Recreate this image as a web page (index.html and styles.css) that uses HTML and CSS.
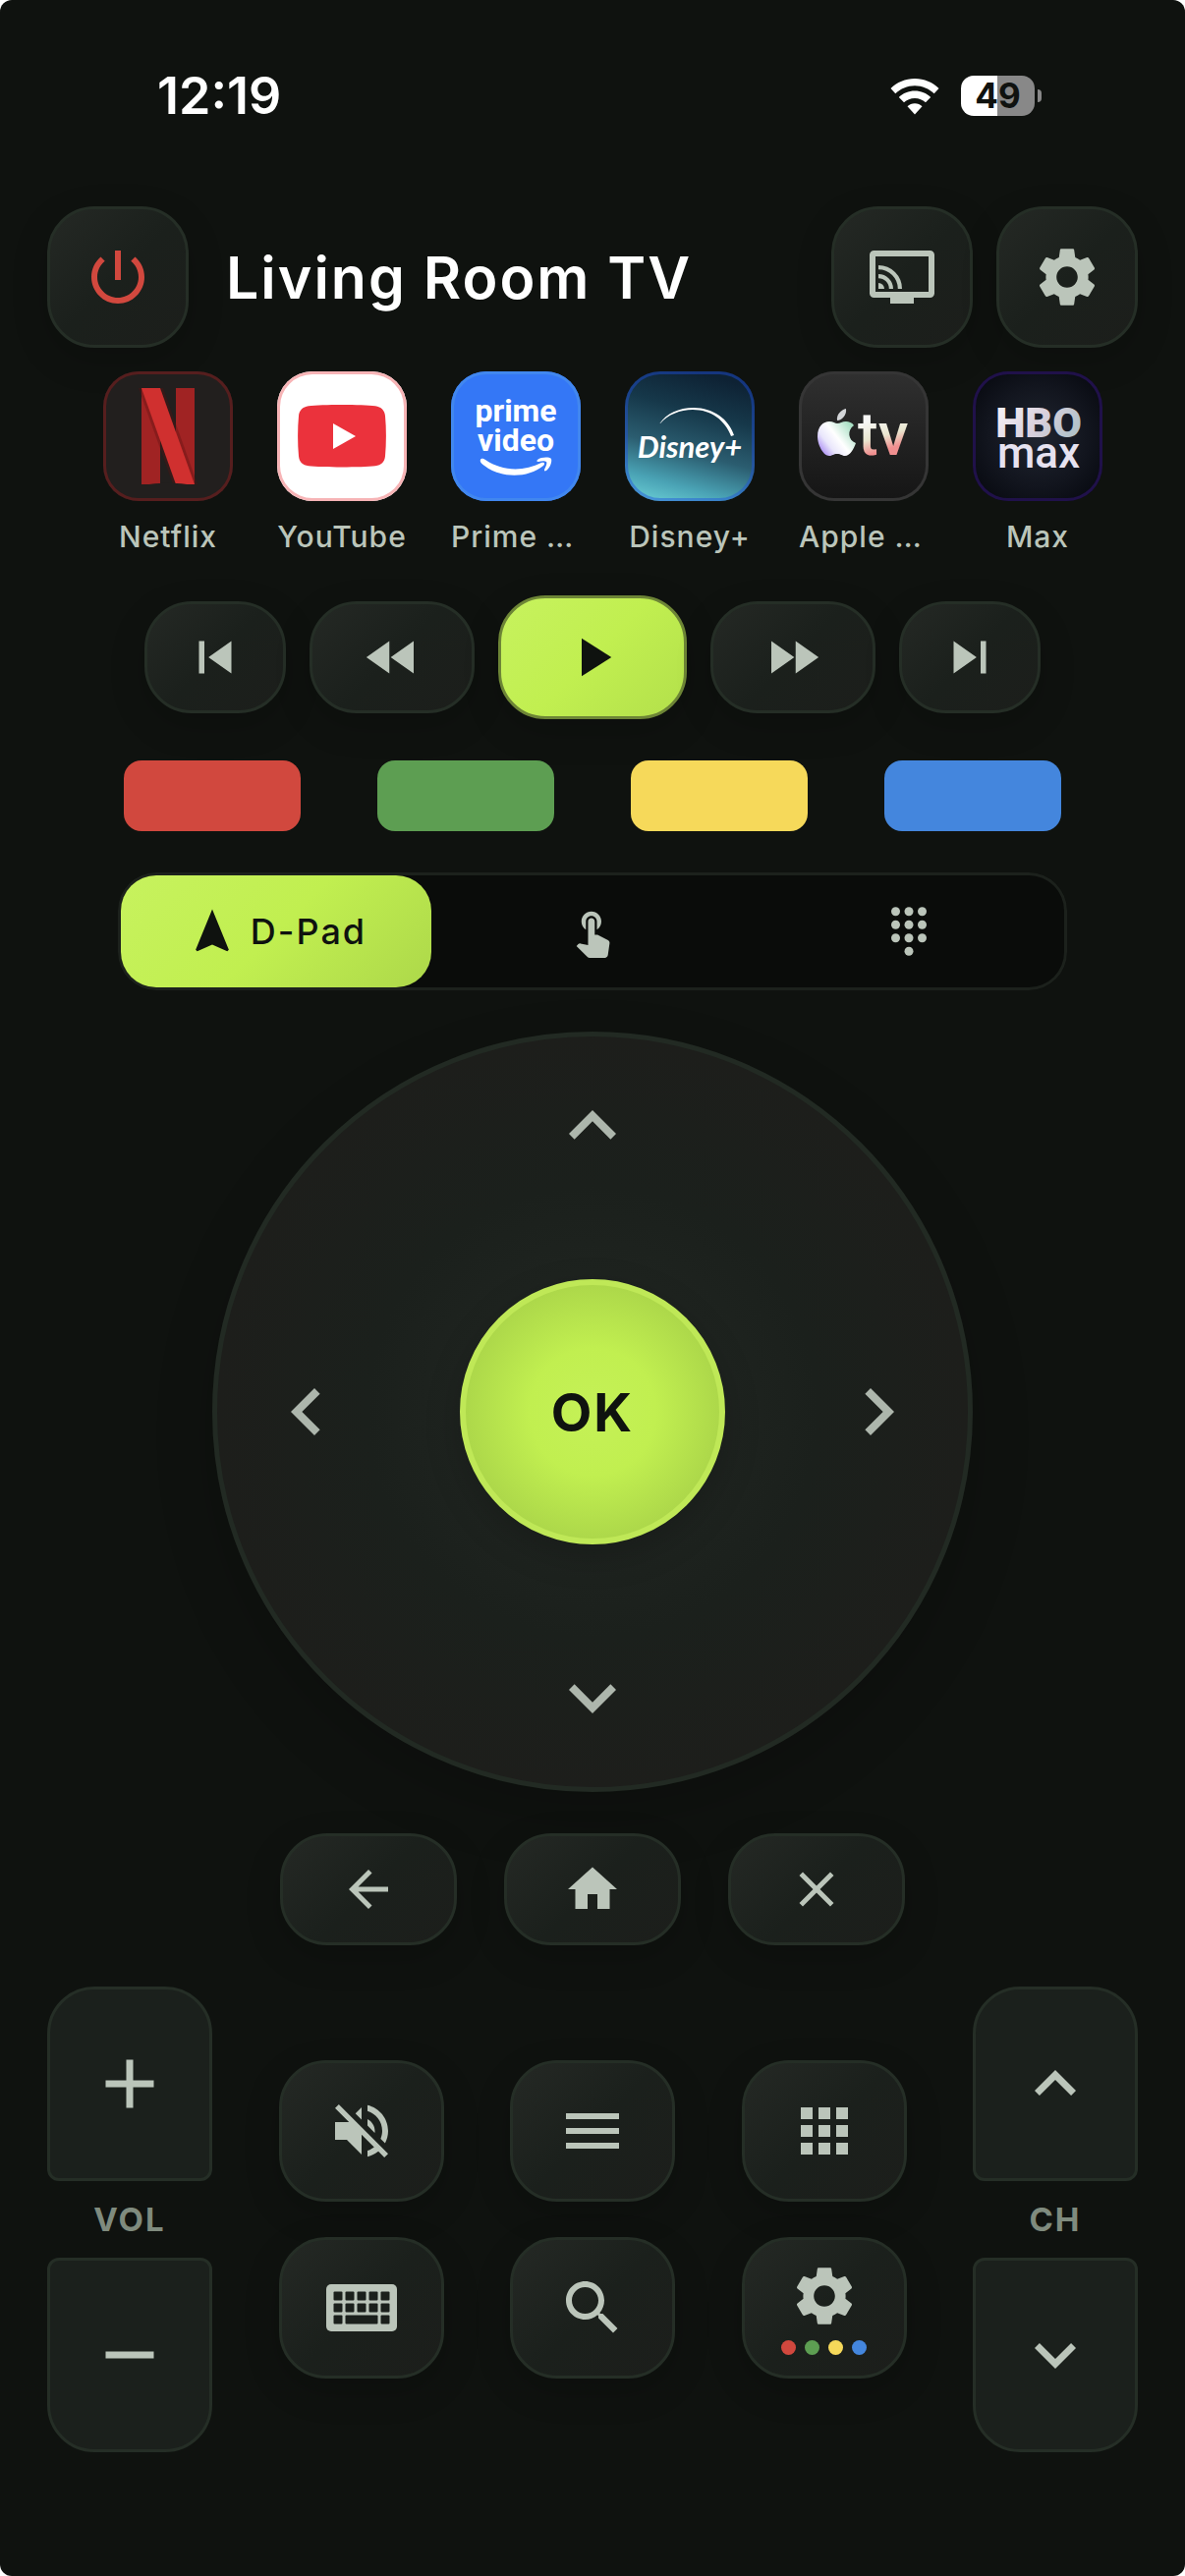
FILE: index.html
```html
<!DOCTYPE html>
<html lang="en">
<head>
    <meta charset="UTF-8">
    <meta name="viewport" content="width=device-width, initial-scale=1.0">
    <title>Living Room TV</title>
    <link rel="stylesheet" href="styles.css">
</head>
<body>
<div class="remote">
    <div class="status-bar">
        <span class="time">12:19</span>
        <div class="status-icons">
            <svg class="wifi" viewBox="0 0 50 38" aria-hidden="true">
                <path d="M25 1C15.500 1 6.800 4.800.5 11l4.800 5.200C10.500 11.200 17.400 8.200 25 8.200s14.500 3 19.700 8L49.500 11C43.200 4.800 34.500 1 25 1z"/>
                <path d="M25 13.500c-6.200 0-11.900 2.400-16.200 6.400l5.200 5.400c2.900-2.700 6.700-4.400 11-4.400s8.100 1.700 11 4.400l5.200-5.400c-4.300-4-10-6.400-16.200-6.400z"/>
                <path d="M25 26.300c-2.900 0-5.500 1.100-7.500 3L25 37.500l7.500-8.200c-2-1.900-4.600-3-7.500-3z"/>
            </svg>
            <div class="battery"><span>49</span></div>
        </div>
    </div>

    <header class="header">
        <button class="key square power" aria-label="Power">
            <svg class="icon" viewBox="0 0 24 24"><path d="M13 3h-2v10h2V3zm4.830 2.170l-1.420 1.420C17.990 7.860 19 9.810 19 12c0 3.870-3.130 7-7 7s-7-3.130-7-7c0-2.190 1.010-4.140 2.580-5.420L6.170 5.170C4.230 6.820 3 9.260 3 12c0 4.970 4.030 9 9 9s9-4.030 9-9c0-2.740-1.230-5.180-3.170-6.830z"/></svg>
        </button>
        <h1>Living Room TV</h1>
        <button class="key square" aria-label="Cast">
            <svg class="icon" viewBox="0 0 24 24">
                <path fill-rule="evenodd" d="M2.500 3h19A1.500 1.500 0 0 1 23 4.500v13a1.500 1.500 0 0 1-1.500 1.500H16v2H8v-2H2.500A1.500 1.500 0 0 1 1 17.500v-13A1.500 1.500 0 0 1 2.500 3zM3 5v12h18V5z"/>
                <path d="M4 14a2 2 0 0 1 2 2H4z"/>
                <path class="wave" d="M4 11.700A4.300 4.300 0 0 1 8.300 16M4 8.700A7.300 7.300 0 0 1 11.300 16"/>
            </svg>
        </button>
        <button class="key square" aria-label="Settings">
            <svg class="icon" viewBox="0 0 24 24"><path d="M19.140 12.940c.04-.3.06-.61.06-.94 0-.32-.02-.64-.07-.94l2.030-1.580c.18-.14.23-.41.12-.61l-1.920-3.320c-.12-.22-.37-.29-.59-.22l-2.390.96c-.5-.38-1.030-.7-1.620-.94l-.36-2.540c-.04-.24-.24-.41-.48-.41h-3.840c-.24 0-.43.17-.47.41l-.36 2.540c-.59.24-1.130.57-1.620.94l-2.390-.96c-.22-.08-.47 0-.59.22L2.740 8.870c-.12.21-.08.47.12.61l2.030 1.580c-.05.3-.09.63-.09.94s.02.64.07.94l-2.030 1.580c-.18.14-.23.41-.12.61l1.920 3.320c.12.22.37.29.59.22l2.390-.96c.5.38 1.030.7 1.620.94l.36 2.540c.05.24.24.41.48.41h3.840c.24 0 .44-.17.47-.41l.36-2.540c.59-.24 1.130-.56 1.620-.94l2.390.96c.22.08.47 0 .59-.22l1.920-3.320c.12-.22.07-.47-.12-.61l-2.010-1.580zM12 15.600c-1.980 0-3.600-1.620-3.600-3.600s1.620-3.600 3.600-3.600 3.600 1.620 3.600 3.600-1.620 3.600-3.600 3.600z"/></svg>
        </button>
    </header>

    <main>
        <!-- App shortcuts -->
        <nav class="apps" aria-label="Apps">
            <a class="app" href="#netflix">
                <span class="tile netflix">
                    <svg viewBox="0 0 132 132" aria-hidden="true">
                        <rect class="bar" x="39" y="17" width="19" height="98"/>
                        <rect class="bar" x="74" y="17" width="19" height="98"/>
                        <rect class="ribbon-shade" x="36" y="0" width="25" height="98" transform="translate(0 17) skewX(19.650)"/>
                        <rect class="ribbon" x="39" y="0" width="19" height="98" transform="translate(0 17) skewX(19.650)"/>
                        <path class="foot" d="M39 116q27-5 54 0v4H39z"/>
                    </svg>
                </span>
                <span class="app-name">Netflix</span>
            </a>
            <a class="app" href="#youtube">
                <span class="tile youtube">
                    <svg viewBox="0 0 132 132" aria-hidden="true">
                        <path fill="#eb323c" d="M66 34c14 0 27 .3 34 1.200 6 .8 9.500 4.500 10 10 1.200 13 1.200 28 0 41-.5 5.800-4 9.300-10 10-14 1.600-54 1.600-68 0-6-.7-9.500-4.200-10-10-1.200-13-1.200-28 0-41 .5-5.500 4-9.200 10-10 7-.9 20-1.200 34-1.200z"/>
                        <path fill="#fff" d="M57 53l23 13-23 13z"/>
                    </svg>
                </span>
                <span class="app-name">YouTube</span>
            </a>
            <a class="app" href="#prime">
                <span class="tile prime">
                    <svg viewBox="0 0 132 132" aria-hidden="true">
                        <text x="66" y="51" text-anchor="middle">prime</text>
                        <text x="66" y="81" text-anchor="middle">video</text>
                        <path d="M30 90c1-2 3-1 5 0 18 12 39 12 57 3 3-1 4 1 2 3-16 13-43 13-60 0-3-2-5-4-4-6z"/>
                        <path d="M88 90c4-3 12-3 14-1 1 3-1 9-5 12-2 1-2 0-2-1 2-4 3-7 2-8s-5-1-8 0c-2 0-2-1-1-2z"/>
                    </svg>
                </span>
                <span class="app-name">Prime Video</span>
            </a>
            <a class="app" href="#disney">
                <span class="tile disney">
                    <svg viewBox="0 0 132 132" aria-hidden="true">
                        <path d="M35.500 53C42 43 55 37 70 37c20 0 36 12 41 28l-3 1C102 50 88 39 69 39c-13 0-25 5-33 14z"/>
                        <text x="66" y="88" text-anchor="middle">Disney+</text>
                    </svg>
                </span>
                <span class="app-name">Disney+</span>
            </a>
            <a class="app" href="#appletv">
                <span class="tile appletv">
                    <svg viewBox="0 0 132 132" aria-hidden="true">
                        <defs>
                            <linearGradient id="apple" x1="0" y1="1" x2="1" y2="0.300"><stop offset="0" stop-color="#8d63f0"/><stop offset="0.350" stop-color="#e9e6fb"/><stop offset="0.600" stop-color="#fff"/><stop offset="1" stop-color="#a9dfc4"/></linearGradient>
                            <linearGradient id="tv" x1="0" y1="0" x2="0.200" y2="1"><stop offset="0.350" stop-color="#f7f7f5"/><stop offset="0.600" stop-color="#e9e6cf"/><stop offset="0.800" stop-color="#f08f8f"/></linearGradient>
                        </defs>
                        <path fill="url(#apple)" d="M39 53c3 0 5-2 9-2 3 0 6 1 8 4-7 5-6 15 2 18-2 6-6 13-11 13-3 0-4-2-8-2s-5 2-8 2c-6 0-12-11-12-20 0-10 6-15 12-15 4 0 6 2 8 2z"/>
                        <path fill="#d3d5d8" d="M39 50c-1-6 4-11 9-12 1 6-4 12-9 12z"/>
                        <text x="60" y="85" fill="url(#tv)">tv</text>
                    </svg>
                </span>
                <span class="app-name">Apple TV</span>
            </a>
            <a class="app" href="#max">
                <span class="tile max">
                    <svg viewBox="0 0 132 132" aria-hidden="true">
                        <defs>
                            <linearGradient id="steel" x1="0" x2="1" y2="0.400"><stop offset="0" stop-color="#fbf7fa"/><stop offset="0.600" stop-color="#d9d0dc"/><stop offset="1" stop-color="#b4c3ca"/></linearGradient>
                        </defs>
                        <text class="hbo" x="67" y="67" text-anchor="middle" fill="url(#steel)">HBO</text>
                        <text class="sub" x="67" y="98" text-anchor="middle">max</text>
                    </svg>
                </span>
                <span class="app-name">Max</span>
            </a>
        </nav>

        <!-- Playback -->
        <div class="media">
            <button class="key" aria-label="Previous"><svg class="icon medium" viewBox="0 0 24 24"><path d="M6 6h2v12H6zm3.500 6l8.500 6V6z"/></svg></button>
            <button class="key wide" aria-label="Rewind"><svg class="icon medium" viewBox="0 0 24 24"><path d="M11 18V6l-8.500 6 8.500 6zm.5-6l8.500 6V6l-8.500 6z"/></svg></button>
            <button class="key play" aria-label="Play"><svg class="icon medium" viewBox="0 0 24 24"><path d="M8 5v14l11-7z"/></svg></button>
            <button class="key wide" aria-label="Fast forward"><svg class="icon medium" viewBox="0 0 24 24"><path d="M4 18l8.500-6L4 6v12zm9-12v12l8.500-6L13 6z"/></svg></button>
            <button class="key" aria-label="Next"><svg class="icon medium" viewBox="0 0 24 24"><path d="M6 18l8.500-6L6 6v12zM16 6v12h2V6h-2z"/></svg></button>
        </div>

        <div class="colors">
            <button class="color red" aria-label="Red"></button>
            <button class="color green" aria-label="Green"></button>
            <button class="color yellow" aria-label="Yellow"></button>
            <button class="color blue" aria-label="Blue"></button>
        </div>

        <!-- Input mode -->
        <div class="modes">
            <button class="mode active" aria-pressed="true">
                <svg class="icon tiny" viewBox="0 0 24 24"><path d="M12 2L4.500 20.290l.71.71L12 18l6.790 3 .71-.71z"/></svg>
                D-Pad
            </button>
            <button class="mode" aria-label="Touchpad">
                <svg class="icon tiny" viewBox="0 0 24 24"><path d="M9 11.240V7.500C9 6.120 10.120 5 11.500 5S14 6.120 14 7.500v3.740c1.210-.81 2-2.180 2-3.740C16 5.010 13.990 3 11.500 3S7 5.010 7 7.500c0 1.560.79 2.930 2 3.740zm9.840 4.630l-4.540-2.260c-.17-.07-.35-.11-.54-.11H13v-6c0-.83-.67-1.500-1.500-1.500S10 6.670 10 7.500v10.740l-3.430-.72c-.08-.01-.15-.03-.24-.03-.31 0-.59.13-.79.33l-.79.8 4.940 4.940c.27.27.65.44 1.060.44h6.790c.75 0 1.330-.55 1.440-1.280l.75-5.270c.01-.07.02-.14.02-.2 0-.62-.38-1.160-.91-1.380z"/></svg>
            </button>
            <button class="mode" aria-label="Number pad">
                <svg class="icon tiny" viewBox="0 0 24 24">
                    <circle cx="6" cy="3" r="2"/><circle cx="12" cy="3" r="2"/><circle cx="18" cy="3" r="2"/>
                    <circle cx="6" cy="9" r="2"/><circle cx="12" cy="9" r="2"/><circle cx="18" cy="9" r="2"/>
                    <circle cx="6" cy="15" r="2"/><circle cx="12" cy="15" r="2"/><circle cx="18" cy="15" r="2"/>
                    <circle cx="12" cy="21" r="2"/>
                </svg>
            </button>
        </div>

        <div class="dpad">
            <button class="arrow up" aria-label="Up"><svg class="icon large" viewBox="0 0 24 24"><path d="M7.410 15.410L12 10.830l4.590 4.580L18 14l-6-6-6 6z"/></svg></button>
            <button class="arrow left" aria-label="Left"><svg class="icon large" viewBox="0 0 24 24"><path d="M15.410 16.590L10.830 12l4.580-4.590L14 6l-6 6 6 6z"/></svg></button>
            <button class="ok">OK</button>
            <button class="arrow right" aria-label="Right"><svg class="icon large" viewBox="0 0 24 24"><path d="M8.590 16.590L13.170 12 8.590 7.410 10 6l6 6-6 6z"/></svg></button>
            <button class="arrow down" aria-label="Down"><svg class="icon large" viewBox="0 0 24 24"><path d="M7.410 8.590L12 13.170l4.590-4.580L18 10l-6 6-6-6z"/></svg></button>
        </div>

        <div class="nav-keys">
            <button class="key" aria-label="Back"><svg class="icon small" viewBox="0 0 24 24"><path d="M20 11H7.830l5.590-5.590L12 4l-8 8 8 8 1.410-1.410L7.830 13H20z"/></svg></button>
            <button class="key" aria-label="Home"><svg class="icon small" viewBox="0 0 24 24"><path d="M10 20v-6h4v6h5v-8h3L12 3 2 12h3v8z"/></svg></button>
            <button class="key" aria-label="Exit"><svg class="icon small" viewBox="0 0 24 24"><path d="M19 6.410L17.590 5 12 10.590 6.410 5 5 6.410 10.590 12 5 17.590 6.410 19 12 13.410 17.590 19 19 17.590 13.410 12z"/></svg></button>
        </div>

        <div class="bottom">
            <div class="rocker">
                <button class="step top" aria-label="Volume up"><svg class="icon big" viewBox="0 0 24 24"><path d="M19 13h-6v6h-2v-6H5v-2h6V5h2v6h6z"/></svg></button>
                <span class="rocker-label">VOL</span>
                <button class="step base" aria-label="Volume down"><svg class="icon big" viewBox="0 0 24 24"><path d="M5 11h14v2H5z"/></svg></button>
            </div>

            <div class="pad">
                <div class="pad-row">
                    <button class="key" aria-label="Mute"><svg class="icon" viewBox="0 0 24 24"><path d="M16.500 12c0-1.770-1.020-3.290-2.500-4.030v2.210l2.450 2.450c.03-.2.05-.41.05-.63zm2.500 0c0 .94-.2 1.820-.54 2.640l1.510 1.510C20.630 14.910 21 13.500 21 12c0-4.280-2.990-7.860-7-8.770v2.060c2.890.86 5 3.540 5 6.710zM4.270 3L3 4.270 7.730 9H3v6h4l5 5v-6.730l4.250 4.250c-.67.52-1.420.93-2.250 1.180v2.060c1.380-.31 2.630-.95 3.690-1.810L19.730 21 21 19.730l-9-9L4.270 3zM12 4L9.910 6.090 12 8.180V4z"/></svg></button>
                    <button class="key" aria-label="Menu"><svg class="icon" viewBox="0 0 24 24"><path d="M3 18h18v-2H3v2zm0-5h18v-2H3v2zm0-7v2h18V6H3z"/></svg></button>
                    <button class="key" aria-label="Apps"><svg class="icon" viewBox="0 0 24 24"><path d="M4 8h4V4H4v4zm6 12h4v-4h-4v4zm-6 0h4v-4H4v4zm0-6h4v-4H4v4zm6 0h4v-4h-4v4zm6-10v4h4V4h-4zm-6 4h4V4h-4v4zm6 6h4v-4h-4v4zm0 6h4v-4h-4v4z"/></svg></button>
                </div>
                <div class="pad-row">
                    <button class="key" aria-label="Keyboard">
                        <svg class="icon" viewBox="0 0 72 72">
                            <rect y="12" width="72" height="48" rx="5"/>
                            <g class="hole">
                                <rect x="7.500" y="19.500" width="9" height="9" rx="1"/><rect x="19.500" y="19.500" width="9" height="9" rx="1"/><rect x="31.500" y="19.500" width="9" height="9" rx="1"/><rect x="43.500" y="19.500" width="9" height="9" rx="1"/><rect x="55.500" y="19.500" width="9" height="9" rx="1"/>
                                <rect x="7.500" y="31.500" width="9" height="9" rx="1"/><rect x="19.500" y="31.500" width="9" height="9" rx="1"/><rect x="31.500" y="31.500" width="9" height="9" rx="1"/><rect x="43.500" y="31.500" width="9" height="9" rx="1"/><rect x="55.500" y="31.500" width="9" height="9" rx="1"/>
                                <rect x="7.500" y="43.500" width="9" height="9" rx="1"/><rect x="19.500" y="43.500" width="33" height="9" rx="1"/><rect x="55.500" y="43.500" width="9" height="9" rx="1"/>
                            </g>
                        </svg>
                    </button>
                    <button class="key" aria-label="Search"><svg class="icon" viewBox="0 0 24 24"><path d="M15.500 14h-.79l-.28-.27C15.410 12.590 16 11.110 16 9.500 16 5.910 13.090 3 9.500 3S3 5.910 3 9.500 5.910 16 9.500 16c1.610 0 3.090-.59 4.230-1.570l.27.28v.79l5 4.990L20.490 19l-4.990-5zm-6 0C7.010 14 5 11.990 5 9.500S7.010 5 9.500 5 14 7.010 14 9.500 11.990 14 9.500 14z"/></svg></button>
                    <button class="key stacked" aria-label="Color keys">
                        <svg class="icon" viewBox="0 0 24 24"><path d="M19.140 12.940c.04-.3.06-.61.06-.94 0-.32-.02-.64-.07-.94l2.030-1.580c.18-.14.23-.41.12-.61l-1.920-3.320c-.12-.22-.37-.29-.59-.22l-2.390.96c-.5-.38-1.030-.7-1.620-.94l-.36-2.540c-.04-.24-.24-.41-.48-.41h-3.840c-.24 0-.43.17-.47.41l-.36 2.540c-.59.24-1.130.57-1.620.94l-2.390-.96c-.22-.08-.47 0-.59.22L2.740 8.870c-.12.21-.08.47.12.61l2.030 1.580c-.05.3-.09.63-.09.94s.02.64.07.94l-2.030 1.580c-.18.14-.23.41-.12.61l1.920 3.320c.12.22.37.29.59.22l2.390-.96c.5.38 1.030.7 1.620.94l.36 2.540c.05.24.24.41.48.41h3.840c.24 0 .44-.17.47-.41l.36-2.540c.59-.24 1.130-.56 1.620-.94l2.390.96c.22.08.47 0 .59-.22l1.920-3.320c.12-.22.07-.47-.12-.61l-2.010-1.580zM12 15.600c-1.980 0-3.600-1.620-3.600-3.600s1.620-3.600 3.600-3.600 3.600 1.620 3.600 3.600-1.620 3.600-3.600 3.600z"/></svg>
                        <span class="dots"><i class="red"></i><i class="green"></i><i class="yellow"></i><i class="blue"></i></span>
                    </button>
                </div>
            </div>

            <div class="rocker">
                <button class="step top" aria-label="Channel up"><svg class="icon big" viewBox="0 0 24 24"><path d="M7.410 15.410L12 10.830l4.590 4.580L18 14l-6-6-6 6z"/></svg></button>
                <span class="rocker-label">CH</span>
                <button class="step base" aria-label="Channel down"><svg class="icon big" viewBox="0 0 24 24"><path d="M7.410 8.590L12 13.170l4.590-4.580L18 10l-6 6-6-6z"/></svg></button>
            </div>
        </div>
    </main>
</div>
</body>
</html>
```
FILE: styles.css
```css
* {
    margin: 0;
    padding: 0;
    box-sizing: border-box;
}

:root {
    --bg: #0f120f;
    --ink: #bbc5ba;
    --line: #252e26;
    --lime: linear-gradient(135deg, #c7f25e, #c1ef50 50%, #add84a);
    --red: #d1483e;
    --green: #5d9e52;
    --yellow: #f6d95a;
    --blue: #4486dd;
}

body {
    font-family: Inter, Roboto, "Liberation Sans", sans-serif;
    background: #fff;
}

button {
    font: inherit;
    color: inherit;
    border: none;
    background: none;
    cursor: pointer;
}

.remote {
    min-height: 100vh;
    background: var(--bg);
    border-radius: 12px;
    color: var(--ink);
    padding-bottom: 126px;
}

/* Status bar */
.status-bar {
    display: flex;
    justify-content: space-between;
    align-items: center;
    height: 210px;
    padding: 0 146px 15px 160px;
    color: #fff;
}

.time {
    font-size: 52px;
    font-weight: 600;
}

.status-icons {
    display: flex;
    align-items: center;
    gap: 22px;
}

.wifi {
    width: 50px;
    height: 38px;
    fill: #fff;
}

.battery {
    position: relative;
    width: 75px;
    height: 41px;
    margin-right: 7px;
    border-radius: 13px;
    background: linear-gradient(90deg, #fff 49%, #888 49%);
    color: var(--bg);
    font-size: 35px;
    font-weight: 700;
    line-height: 41px;
    text-align: center;
}

.battery::after {
    content: "";
    position: absolute;
    right: -7px;
    top: 14px;
    width: 4px;
    height: 13px;
    border-radius: 0 6px 6px 0;
    background: #888;
}

/* Header */
.header {
    display: flex;
    align-items: center;
    gap: 24px;
    padding: 0 48px;
}

.header h1 {
    flex: 1;
    padding-left: 14px;
    color: #fff;
    font-size: 59px;
    font-weight: 600;
    letter-spacing: 2px;
    white-space: nowrap;
}

.key {
    display: flex;
    justify-content: center;
    align-items: center;
    width: 168px;
    height: 144px;
    border: 3px solid var(--line);
    border-radius: 48px;
    background: linear-gradient(135deg, #252925, #1b201c 50%, #1c1e1b);
    background-origin: border-box;
    box-shadow: 0 12px 36px rgba(0, 0, 0, 0.18);
}

.square {
    width: 144px;
}

.icon {
    display: block;
    width: 72px;
    height: 72px;
    fill: currentColor;
}

.tiny {
    width: 54px;
    height: 54px;
}

.small {
    width: 60px;
    height: 60px;
}

.medium {
    width: 66px;
    height: 66px;
}

.big {
    width: 84px;
    height: 84px;
}

.large {
    width: 96px;
    height: 96px;
}

.wave {
    fill: none;
    stroke: currentColor;
    stroke-width: 1.4;
}

.hole {
    fill: #1b201c;
}

.power {
    color: var(--red);
}

main {
    display: flex;
    flex-direction: column;
    gap: 42px;
    padding-top: 24px;
}

/* App shortcuts */
.apps {
    display: flex;
    gap: 45px;
    padding-left: 105px;
    overflow: hidden;
}

.app {
    width: 132px;
    color: inherit;
    text-decoration: none;
}

.tile {
    display: block;
    height: 132px;
    border-radius: 36px;
    overflow: hidden;
}

.tile svg {
    display: block;
}

.app-name {
    display: block;
    margin-top: 18px;
    font-size: 30px;
    font-weight: 500;
    line-height: 36px;
    letter-spacing: 1px;
    text-align: center;
    white-space: nowrap;
    overflow: hidden;
    text-overflow: ellipsis;
}

.netflix {
    background: #221f1e;
    box-shadow: inset 0 0 0 3px #561e1e;
}

.netflix .bar {
    fill: #a02323;
}

.netflix .ribbon-shade {
    fill: #5a1010;
    opacity: 0.35;
}

.netflix .ribbon {
    fill: #d0302f;
}

.netflix .foot {
    fill: #221f1e;
}

.youtube {
    background: #fff;
    box-shadow: inset 0 0 0 3px #f7b4b6;
}

.prime {
    background: #3477f6;
    box-shadow: inset 0 0 0 3px #4187ef;
}

.prime svg {
    fill: #fff;
    font-family: Roboto, sans-serif;
    font-size: 32px;
    font-weight: 700;
}

.disney {
    background: linear-gradient(15deg, #6fd5da, #4aa3b5 18%, #2b5d70 40%, #16384a 66%, #0e2234 90%);
    box-shadow: inset 0 0 0 3px rgba(30, 80, 220, 0.45);
}

.disney svg {
    fill: #fff;
    font-family: Lato, sans-serif;
    font-size: 31px;
    font-style: italic;
    font-weight: 700;
}

.appletv {
    background: linear-gradient(#303030, #151515);
    box-shadow: inset 0 0 0 3px #353535;
}

.appletv svg {
    font-family: Roboto, sans-serif;
    font-size: 62px;
    font-weight: 500;
}

.max {
    background: radial-gradient(circle, #202530, #12151e 55%, #04060c);
    box-shadow: inset 0 0 0 3px #20114a;
}

.max svg {
    font-family: Roboto, sans-serif;
    fill: #e6e2f0;
}

.max .hbo {
    font-size: 43px;
    font-weight: 900;
}

.max .sub {
    font-size: 44px;
    font-weight: 500;
}

/* Playback */
.media {
    display: flex;
    justify-content: center;
    align-items: center;
    gap: 24px;
}

.media .key {
    width: 144px;
    height: 114px;
}

.media .wide {
    width: 168px;
}

.media .play {
    width: 192px;
    height: 126px;
    border-color: #6d8536;
    background: linear-gradient(135deg, #c7f25e, #c1ef50 50%, #b3e04b);
    color: #0f120f;
}

.colors {
    display: flex;
    justify-content: space-between;
    padding: 0 126px;
}

.color {
    width: 180px;
    height: 72px;
    border-radius: 18px;
}

.red {
    background: var(--red);
}

.green {
    background: var(--green);
}

.yellow {
    background: var(--yellow);
}

.blue {
    background: var(--blue);
}

/* Input mode */
.modes {
    display: grid;
    grid-template-columns: repeat(3, 1fr);
    height: 120px;
    margin: 0 120px;
    border-radius: 39px;
    background: #0a0c0a;
    box-shadow: inset 0 0 0 3px #1c211c;
}

.mode {
    display: flex;
    justify-content: center;
    align-items: center;
    gap: 12px;
    margin: 3px;
    border-radius: 36px;
    font-size: 36px;
    font-weight: 500;
    letter-spacing: 2px;
}

.active {
    background: var(--lime);
    color: #0f120f;
}

/* Direction pad */
.dpad {
    display: grid;
    grid-template-columns: 1fr 270px 1fr;
    grid-template-rows: 1fr 270px 1fr;
    grid-template-areas:
        ". up ."
        "left ok right"
        ". down .";
    align-self: center;
    width: 774px;
    height: 774px;
    padding: 43px;
    border: 5px solid #222a23;
    border-radius: 50%;
    background: radial-gradient(circle closest-side, #1f2420 30%, #1b201c 60%, #1d1e1b);
    box-shadow: 0 24px 60px rgba(0, 0, 0, 0.18);
}

.arrow {
    display: flex;
    color: #adb6ac;
}

.up {
    grid-area: up;
    justify-content: center;
}

.down {
    grid-area: down;
    justify-content: center;
    align-items: flex-end;
}

.left {
    grid-area: left;
    align-items: center;
}

.right {
    grid-area: right;
    justify-content: flex-end;
    align-items: center;
}

.ok {
    grid-area: ok;
    border: 6px solid #bfe857;
    border-radius: 50%;
    background: radial-gradient(circle closest-side, #c5f157, #c1ef50 50%, #add84a);
    box-shadow: 0 12px 36px rgba(0, 0, 0, 0.2);
    color: #0f120f;
    font-size: 54px;
    font-weight: 700;
    letter-spacing: 2px;
}

.nav-keys {
    display: flex;
    justify-content: center;
    gap: 48px;
}

.nav-keys .key {
    width: 180px;
    height: 114px;
}

/* Volume, shortcuts, channel */
.bottom {
    display: flex;
    padding: 0 48px;
}

.rocker {
    display: flex;
    flex-direction: column;
    width: 168px;
}

.step {
    display: flex;
    justify-content: center;
    align-items: center;
    height: 198px;
    border: 3px solid var(--line);
    background: #1b201c;
}

.top {
    border-radius: 48px 48px 12px 12px;
}

.base {
    border-radius: 12px 12px 48px 48px;
}

.rocker-label {
    color: #7f8b7e;
    font-size: 33px;
    font-weight: 700;
    line-height: 78px;
    letter-spacing: 2px;
    text-align: center;
}

.pad {
    flex: 1;
    display: flex;
    flex-direction: column;
    justify-content: center;
    gap: 36px;
}

.pad-row {
    display: flex;
    justify-content: space-evenly;
}

.stacked {
    flex-direction: column;
    gap: 9px;
}

.dots {
    display: flex;
    gap: 9px;
}

.dots i {
    width: 15px;
    height: 15px;
    border-radius: 50%;
}
```
